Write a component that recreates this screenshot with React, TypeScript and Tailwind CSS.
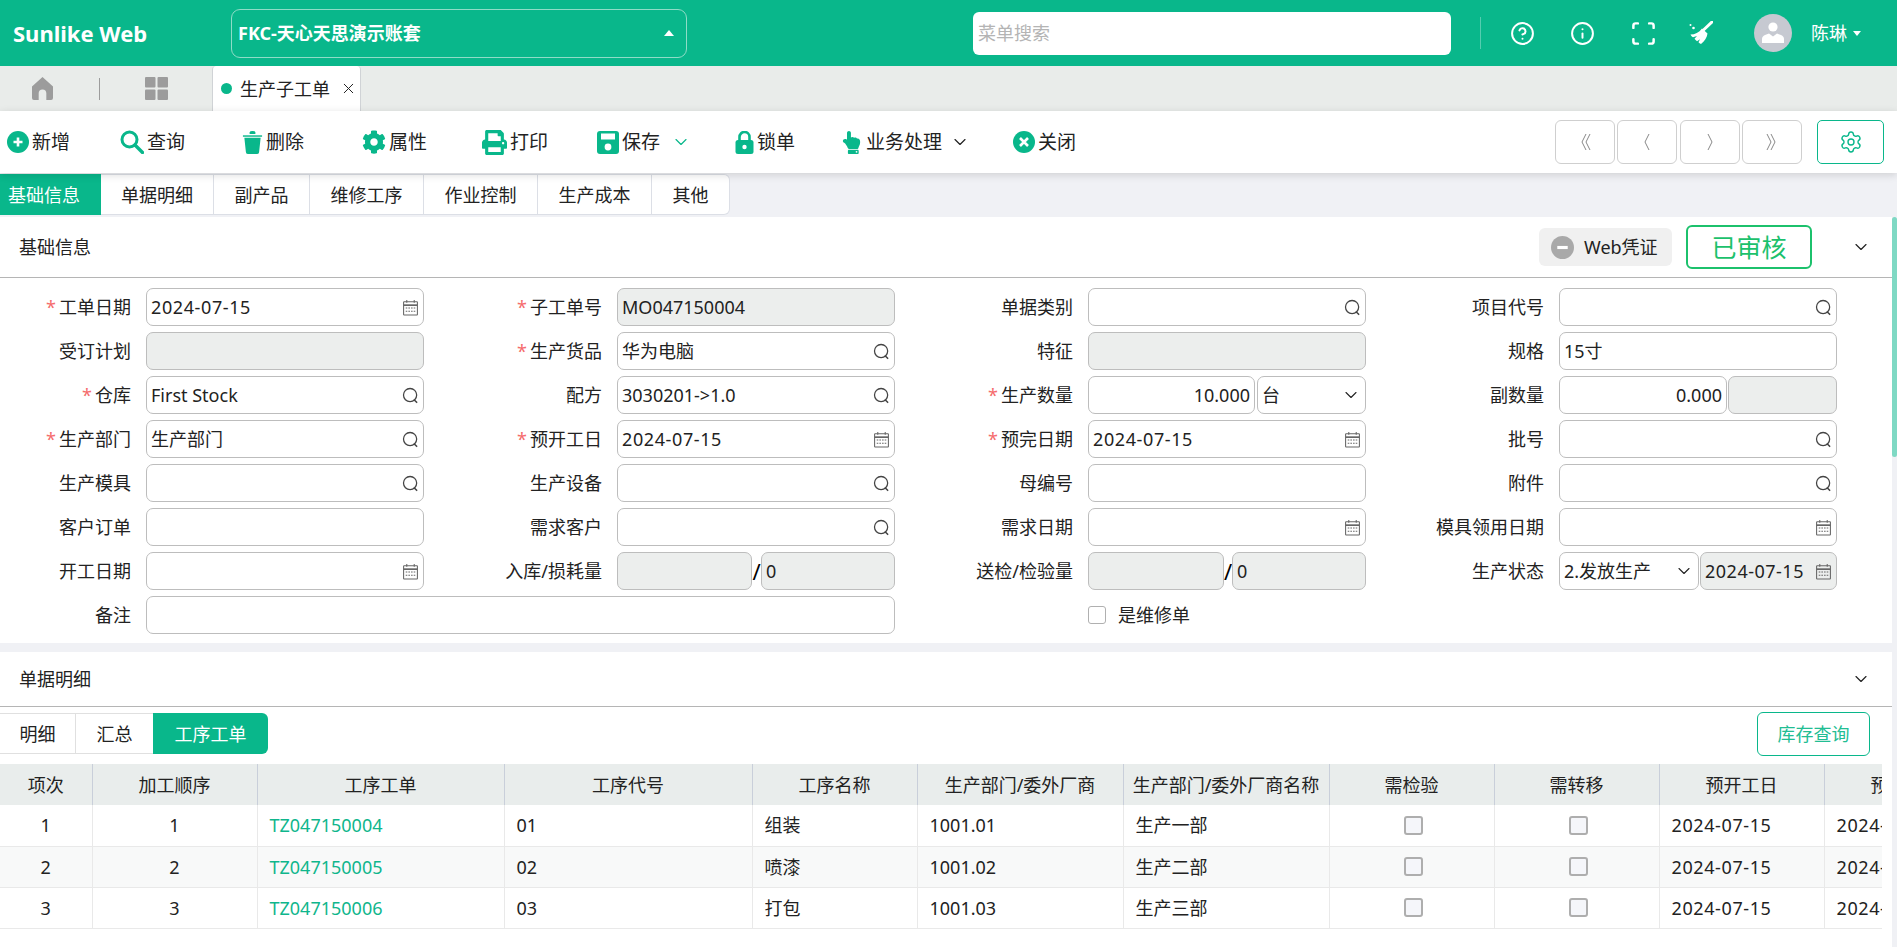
import type { JSX, ReactNode } from "react";
import { ChevronDown, CircleHelp, Info, Scan, Settings, X } from "lucide-react";
import { FaCog, FaHandPointUp, FaPrint } from "react-icons/fa";

const SearchIcon = () => (
  <svg viewBox="0 0 16 16" className="h-[17px] w-[17px] shrink-0" fill="none" stroke="#444" strokeWidth="1.2">
    <circle cx="7.6" cy="7.6" r="6.2" />
    <path d="M11.6 12.2l2.2 2.2" strokeWidth="1.5" strokeLinecap="round" />
  </svg>
);

const CalendarIcon = () => (
  <svg viewBox="0 0 16 16" className="h-[17px] w-[17px] shrink-0" fill="none" stroke="#666" strokeWidth="1">
    <rect x="1.5" y="2.5" width="13" height="12.5" rx="0.5" />
    <path d="M1.5 5.8h13" strokeWidth="1.6" />
    <path d="M4.5 1v2.5M11.5 1v2.5" />
    <path d="M3.5 8.5h9M3.5 11.5h9" strokeDasharray="1.5 1" />
  </svg>
);

const Caret = ({ up }: { up?: boolean }) => (
  <svg viewBox="0 0 10 6" className={up ? "h-[6px] w-[10px]" : "h-[5px] w-[8px]"} fill="#fff">
    <path d={up ? "M5 0l5 6H0z" : "M0 0h10L5 6z"} />
  </svg>
);

const PlusCircle = () => (
  <svg viewBox="0 0 22 22" className="h-[22px] w-[22px]">
    <circle cx="11" cy="11" r="11" fill="#09b78b" />
    <path d="M11 6.5v9M6.5 11h9" stroke="#fff" strokeWidth="2.6" />
  </svg>
);

const Magnifier = () => (
  <svg viewBox="0 0 24 24" className="h-[24px] w-[24px]" fill="none" stroke="#09b78b">
    <circle cx="9.5" cy="9.5" r="7.5" strokeWidth="3" />
    <path d="M15 15l7.500 7.500" strokeWidth="3.4" strokeLinecap="round" />
  </svg>
);

const Trash = () => (
  <svg viewBox="0 0 20 24" className="h-[23px] w-[21px]" fill="#09b78b">
    <path d="M0 4.5h20v1.5H0z" />
    <path d="M7 1.500a3 1.500 0 0 1 6 0V3H7z" />
    <path d="M1.500 7h17l-1.600 15a2 2 0 0 1-2 2H5.100a2 2 0 0 1-2-2z" />
  </svg>
);

const Floppy = () => (
  <svg viewBox="0 0 22 23" className="h-[23px] w-[22px]">
    <rect width="22" height="23" rx="3" fill="#09b78b" />
    <rect x="4" y="2.500" width="14" height="6" fill="#fff" />
    <circle cx="11" cy="16" r="3.400" fill="#fff" />
  </svg>
);

const Lock = () => (
  <svg viewBox="0 0 18 23" className="h-[23px] w-[19px]">
    <path d="M4 10V6a5 5 0 0 1 10 0v4" fill="none" stroke="#09b78b" strokeWidth="2.600" />
    <rect y="9" width="18" height="14" rx="2.500" fill="#09b78b" />
    <circle cx="9" cy="16" r="2.200" fill="#fff" />
  </svg>
);

const CloseCircle = () => (
  <svg viewBox="0 0 22 22" className="h-[22px] w-[22px]">
    <circle cx="11" cy="11" r="11" fill="#09b78b" />
    <path d="M7 7l8 8M15 7l-8 8" stroke="#fff" strokeWidth="2.600" />
  </svg>
);

const Avatar = () => (
  <svg viewBox="0 0 38 38" className="h-[38px] w-[38px]">
    <circle cx="19" cy="19" r="19" fill="#c6c9d1" />
    <circle cx="19" cy="13" r="4.600" fill="#fff" />
    <path d="M8 29v-4c0-2 1-3 3-4l4-1.500 4 3 4-3 4 1.500c2 1 3 2 3 4v4z" fill="#fff" />
  </svg>
);

const Broom = () => (
  <svg viewBox="0 0 24 24" className="h-[24px] w-[24px]" fill="#fff">
    <path d="M23 1l-8.500 8" stroke="#fff" strokeWidth="3" strokeLinecap="round" />
    <path d="M13 7.500l5.500 5c-.5 4-3 8-6.500 10.500-1-.5-2-1.200-2.500-1.800l1.500-3-3 2c-1-.7-1.800-1.500-2.500-2.400l2.500-2.800-4 1.300C2.700 15.500 2 14.500 1.500 13.500c4.500 0 8.500-2 11.500-6z" />
    <circle cx="1.500" cy="4" r="1" />
    <circle cx="4.500" cy="7" r="1.300" />
  </svg>
);

const Chevrons = ({ d }: { d: string }) => (
  <svg viewBox="0 0 16 24" className="h-[24px] w-[16px]" fill="none" stroke="#888" strokeWidth="1">
    <path d={d} />
  </svg>
);

const ToolItem = ({ icon, label, extra }: { icon: ReactNode; label: string; extra?: ReactNode }): JSX.Element => (
  <div className="flex items-center gap-[3px] text-[19px] text-[#222]">
    {icon}
    <span>{label}</span>
    {extra}
  </div>
);

const Box = ({ children, disabled, className = "w-full" }: { children?: ReactNode; disabled?: boolean; className?: string }) => (
  <div className={`flex h-[38px] items-center justify-between rounded-[7px] border border-[#bdbdbd] px-[4px] text-[18px] text-[#222] ${disabled ? "bg-[#eceeed]" : "bg-white"} ${className}`}>
    {children}
  </div>
);

const Field = ({ label, required, children, wide }: { label: string; required?: boolean; children?: ReactNode; wide?: boolean }) => (
  <div className={`flex items-center ${wide ? "col-span-2" : ""}`}>
    <div className="mr-[15px] w-[131px] text-right text-[18px] text-[#222]">
      {required && <span className="mr-[3px] text-[#f56c6c]">*</span>}
      {label}
    </div>
    <div className={`flex items-center ${wide ? "w-[749px]" : "w-[278px]"}`}>{children}</div>
  </div>
);

const TextBox = ({ value, icon, disabled }: { value?: string; icon?: "search" | "date"; disabled?: boolean }) => (
  <Box disabled={disabled}>
    <span className={icon === "date" ? "tracking-[0.6px]" : ""}>{value}</span>
    {icon === "search" && <SearchIcon />}
    {icon === "date" && <CalendarIcon />}
  </Box>
);

const pager = ["M9 4L5 12l4 8M13 4L9 12l4 8", "M10 4L6 12l4 8", "M6 4l4 8-4 8", "M3 4l4 8-4 8M7 4l4 8-4 8"];

const columns = [
  { title: "项次", width: "w-[92px]" },
  { title: "加工顺序", width: "w-[165px]" },
  { title: "工序工单", width: "w-[247px]" },
  { title: "工序代号", width: "w-[248px]" },
  { title: "工序名称", width: "w-[165px]" },
  { title: "生产部门/委外厂商", width: "w-[206px]" },
  { title: "生产部门/委外厂商名称", width: "w-[206px]" },
  { title: "需检验", width: "w-[165px]" },
  { title: "需转移", width: "w-[165px]" },
  { title: "预开工日", width: "w-[165px]" },
  { title: "预完日期", width: "w-[165px]" },
];

const rows = [
  { no: "1", order: "TZ047150004", code: "01", name: "组装", vendor: "1001.01", vendorName: "生产一部" },
  { no: "2", order: "TZ047150005", code: "02", name: "喷漆", vendor: "1001.02", vendorName: "生产二部" },
  { no: "3", order: "TZ047150006", code: "03", name: "打包", vendor: "1001.03", vendorName: "生产三部" },
];

const cell = "h-[41px] border-r border-b border-[#e9e9e9] px-[12px] whitespace-nowrap overflow-hidden";

const TableCheck = () => <div className="mx-auto h-[19px] w-[19px] translate-x-[2px] rounded-[3px] border-2 border-[#aeaeae] bg-[#f5f6fa]" />;

export default function App(): JSX.Element {
  return (
    <div className="flex h-[947px] w-[1897px] flex-col overflow-hidden bg-white font-['Noto_Sans','Noto_Sans_CJK_SC',sans-serif] text-[18px] leading-none">
      <header className="flex h-[66px] shrink-0 items-center bg-[#09b78b] text-white">
        <div className="w-[231px] pl-[13px] text-[22px] font-bold">Sunlike Web</div>
        <div className="flex h-[49px] w-[456px] items-center justify-between rounded-[9px] border border-[#8fdcc7] pl-[6px] pr-[12px] text-[18px] font-bold">
          <span>FKC-天心天思演示账套</span>
          <Caret up />
        </div>
        <div className="ml-[286px] flex h-[43px] w-[478px] items-center rounded-[6px] bg-white pl-[5px] text-[18px] text-[#b4b4b4]">菜单搜索</div>
        <div className="ml-[29px] h-[32px] w-px bg-[#55cdb0]" />
        <div className="ml-[29px] flex w-[60px] items-center"><CircleHelp size={25} strokeWidth={1.9} /></div>
        <div className="flex w-[60px] items-center"><Info size={25} strokeWidth={1.9} /></div>
        <div className="flex w-[59px] items-center"><Scan size={27} strokeWidth={2.2} /></div>
        <div className="flex w-[65px] items-center"><Broom /></div>
        <Avatar />
        <span className="ml-[19px] text-[18px]">陈琳</span>
        <span className="ml-[6px] flex"><Caret /></span>
      </header>

      <div className="flex h-[45px] shrink-0 items-center bg-[#e9ecea]">
        <div className="flex w-[99px] justify-center">
          <svg viewBox="0 0 22 24" className="mr-[15px] h-[23px] w-[21px]" fill="#9c9c9c">
            <path d="M11 0l11 10v12a2 2 0 0 1-2 2h-5v-7a4 4 0 0 0-8 0v7H2a2 2 0 0 1-2-2V10z" />
          </svg>
        </div>
        <div className="h-[22px] w-px bg-[#9c9c9c]" />
        <div className="flex w-[112px] justify-center">
          <svg viewBox="0 0 23 23" className="h-[23px] w-[23px]" fill="#9c9c9c">
            <rect width="10.500" height="10.500" rx="1" />
            <rect x="12.500" width="10.500" height="10.500" rx="1" />
            <rect y="12.500" width="10.500" height="10.500" rx="1" />
            <rect x="12.500" y="12.500" width="10.500" height="10.500" rx="1" />
          </svg>
        </div>
        <div className="flex h-full w-[149px] items-center rounded-t-[4px] border-x border-[#d0d3d6] bg-white pl-[8px] text-[18px] text-[#222]">
          <span className="mr-[8px] h-[11px] w-[11px] rounded-full bg-[#09b78b]" />
          生产子工单
          <X size={17} strokeWidth={1.4} className="ml-[10px]" />
        </div>
      </div>

      <div className="z-10 flex h-[62px] shrink-0 items-center bg-white pl-[7px] pr-[13px] shadow-[0_2px_8px_rgba(0,0,0,0.14)]">
        <div className="grid flex-1 grid-cols-[113px_122px_120px_120px_115px_138px_107px_171px_1fr] items-center">
          <ToolItem icon={<PlusCircle />} label="新增" />
          <ToolItem icon={<Magnifier />} label="查询" />
          <ToolItem icon={<Trash />} label="删除" />
          <ToolItem icon={<FaCog size={24} color="#09b78b" />} label="属性" />
          <ToolItem icon={<FaPrint size={25} color="#09b78b" />} label="打印" />
          <ToolItem icon={<Floppy />} label="保存" extra={<ChevronDown size={20} strokeWidth={1.4} color="#09b78b" className="ml-[8px]" />} />
          <ToolItem icon={<Lock />} label="锁单" />
          <ToolItem icon={<FaHandPointUp size={23} color="#09b78b" className="-ml-[2px]" />} label="业务处理" extra={<ChevronDown size={20} strokeWidth={1.4} className="ml-[5px]" />} />
          <ToolItem icon={<CloseCircle />} label="关闭" />
        </div>
        <div className="flex gap-[2.5px]">
          {pager.map((d) => (
            <div key={d} className="flex h-[44px] w-[60px] items-center justify-center rounded-[6px] border border-[#cfcfcf]">
              <Chevrons d={d} />
            </div>
          ))}
        </div>
        <div className="ml-[15px] flex h-[44px] w-[67px] items-center justify-center rounded-[5px] border border-[#09b78b]">
          <Settings size={24} strokeWidth={1.4} color="#09b78b" />
        </div>
      </div>

      <div className="flex h-[44px] shrink-0 items-start bg-[#f0f1f5] pt-[1px] text-[18px] text-[#222]">
        <div className="flex h-[41px] w-[101px] items-center bg-[#09b78b] pl-[8px] text-white">基础信息</div>
        <div className="flex h-[41px] rounded-r-[6px] border border-l-0 border-[#dcdfe6] bg-white">
          <div className="flex w-[113px] items-center justify-center border-r border-[#dcdfe6]">单据明细</div>
          <div className="flex w-[96px] items-center justify-center border-r border-[#dcdfe6]">副产品</div>
          <div className="flex w-[114px] items-center justify-center border-r border-[#dcdfe6]">维修工序</div>
          <div className="flex w-[114px] items-center justify-center border-r border-[#dcdfe6]">作业控制</div>
          <div className="flex w-[114px] items-center justify-center border-r border-[#dcdfe6]">生产成本</div>
          <div className="flex w-[77px] items-center justify-center">其他</div>
        </div>
      </div>

      <div className="flex min-h-0 flex-1">
        <main className="flex w-[1892px] shrink-0 flex-col bg-[#f0f1f5]">
          <section className="h-[426px] shrink-0 bg-white">
            <div className="flex h-[61px] items-center border-b border-[#b5b5b5] pl-[19px] pr-[21px] text-[18px] text-[#222]">
              <span>基础信息</span>
              <div className="ml-auto flex h-[38px] w-[133px] items-center rounded-[6px] bg-[#f0f0f0] pl-[12px]">
                <svg viewBox="0 0 22 22" className="h-[23px] w-[23px]">
                  <circle cx="11" cy="11" r="11" fill="#a9a9a9" />
                  <path d="M6 11h10" stroke="#fff" strokeWidth="3" />
                </svg>
                <span className="ml-[10px]">Web凭证</span>
              </div>
              <div className="ml-[14px] flex h-[44px] w-[126px] items-center justify-center rounded-[6px] border-2 border-[#1cc16c] text-[25px] text-[#1cc16c]">已审核</div>
              <ChevronDown size={20} strokeWidth={1.4} className="ml-[39px]" />
            </div>
            <div className="grid grid-cols-[repeat(4,471px)] gap-y-[6px] pt-[10px]">
              <Field label="工单日期" required><TextBox value="2024-07-15" icon="date" /></Field>
              <Field label="子工单号" required><TextBox value="MO047150004" disabled /></Field>
              <Field label="单据类别"><TextBox icon="search" /></Field>
              <Field label="项目代号"><TextBox icon="search" /></Field>

              <Field label="受订计划"><TextBox disabled /></Field>
              <Field label="生产货品" required><TextBox value="华为电脑" icon="search" /></Field>
              <Field label="特征"><TextBox disabled /></Field>
              <Field label="规格"><TextBox value="15寸" /></Field>

              <Field label="仓库" required><TextBox value="First Stock" icon="search" /></Field>
              <Field label="配方"><TextBox value="3030201->1.0" icon="search" /></Field>
              <Field label="生产数量" required>
                <Box className="w-[167px]"><span className="ml-auto">10.000</span></Box>
                <Box className="ml-[2px] w-[109px]"><span>台</span><ChevronDown size={20} strokeWidth={1.3} /></Box>
              </Field>
              <Field label="副数量">
                <Box className="w-[168px]"><span className="ml-auto">0.000</span></Box>
                <Box disabled className="ml-[1px] w-[109px]" />
              </Field>

              <Field label="生产部门" required><TextBox value="生产部门" icon="search" /></Field>
              <Field label="预开工日" required><TextBox value="2024-07-15" icon="date" /></Field>
              <Field label="预完日期" required><TextBox value="2024-07-15" icon="date" /></Field>
              <Field label="批号"><TextBox icon="search" /></Field>

              <Field label="生产模具"><TextBox icon="search" /></Field>
              <Field label="生产设备"><TextBox icon="search" /></Field>
              <Field label="母编号"><TextBox /></Field>
              <Field label="附件"><TextBox icon="search" /></Field>

              <Field label="客户订单"><TextBox /></Field>
              <Field label="需求客户"><TextBox icon="search" /></Field>
              <Field label="需求日期"><TextBox icon="date" /></Field>
              <Field label="模具领用日期"><TextBox icon="date" /></Field>

              <Field label="开工日期"><TextBox icon="date" /></Field>
              <Field label="入库/损耗量">
                <Box disabled className="w-[135px]" />
                <span className="w-[9px] text-center text-[22px]">/</span>
                <Box disabled className="w-[134px]"><span>0</span></Box>
              </Field>
              <Field label="送检/检验量">
                <Box disabled className="w-[136px]" />
                <span className="w-[8px] text-center text-[22px]">/</span>
                <Box disabled className="w-[134px]"><span>0</span></Box>
              </Field>
              <Field label="生产状态">
                <Box className="w-[140px]"><span>2.发放生产</span><ChevronDown size={20} strokeWidth={1.3} /></Box>
                <Box disabled className="ml-[1px] w-[137px]"><span className="tracking-[0.5px]">2024-07-15</span><CalendarIcon /></Box>
              </Field>

              <Field label="备注" wide><Box /></Field>
              <div className="col-span-2 flex h-[38px] items-center pl-[146px] text-[18px] text-[#222]">
                <div className="h-[18px] w-[18px] rounded-[3px] border border-[#b0b0b0]" />
                <span className="ml-[12px]">是维修单</span>
              </div>
            </div>
          </section>

          <section className="mt-[9px] flex flex-1 flex-col overflow-hidden bg-white">
            <div className="flex h-[55px] shrink-0 items-center justify-between border-b border-[#b5b5b5] pl-[19px] pr-[21px] text-[18px] text-[#222]">
              <span>单据明细</span>
              <ChevronDown size={20} strokeWidth={1.4} />
            </div>
            <div className="flex h-[57px] shrink-0 items-start justify-between pr-[22px] pt-[6px] text-[18px]">
              <div className="flex h-[41px] text-[#222]">
                <div className="flex w-[75px] items-center justify-center border-y border-[#e0e0e0]">明细</div>
                <div className="flex w-[78px] items-center justify-center border border-r-0 border-[#e0e0e0]">汇总</div>
                <div className="flex w-[115px] items-center justify-center rounded-r-[6px] bg-[#09b78b] text-white">工序工单</div>
              </div>
              <div className="-mt-[1px] flex h-[44px] w-[113px] items-center justify-center rounded-[6px] border border-[#09b78b] text-[#22bd93]">库存查询</div>
            </div>
            <div className="w-[1882px] overflow-hidden">
              <table className="w-[1989px] table-fixed border-collapse text-[18px] text-[#222]">
                <thead>
                  <tr className="bg-[#e9edec]">
                    {columns.map((c) => (
                      <th key={c.title} className={`${c.width} h-[41px] overflow-hidden border-r border-[#c9cfda] text-center font-normal whitespace-nowrap`}>{c.title}</th>
                    ))}
                  </tr>
                </thead>
                <tbody>
                  {rows.map((r, i) => (
                    <tr key={r.no} className={i === 1 ? "bg-[#f8f9f9]" : "bg-white"}>
                      <td className={`${cell} text-center`}>{r.no}</td>
                      <td className={`${cell} text-center`}>{r.no}</td>
                      <td className={`${cell} text-[#0fb68c]`}>{r.order}</td>
                      <td className={cell}>{r.code}</td>
                      <td className={cell}>{r.name}</td>
                      <td className={cell}>{r.vendor}</td>
                      <td className={cell}>{r.vendorName}</td>
                      <td className={cell}><TableCheck /></td>
                      <td className={cell}><TableCheck /></td>
                      <td className={`${cell} tracking-[0.6px]`}>2024-07-15</td>
                      <td className={`${cell} tracking-[0.6px]`}>2024-07-15</td>
                    </tr>
                  ))}
                </tbody>
              </table>
            </div>
          </section>
        </main>
        <div className="w-[5px] shrink-0 bg-[#f0f1f5]">
          <div className="h-[240px] rounded-[3px] bg-[#7fd9c4]" />
        </div>
      </div>
    </div>
  );
}
